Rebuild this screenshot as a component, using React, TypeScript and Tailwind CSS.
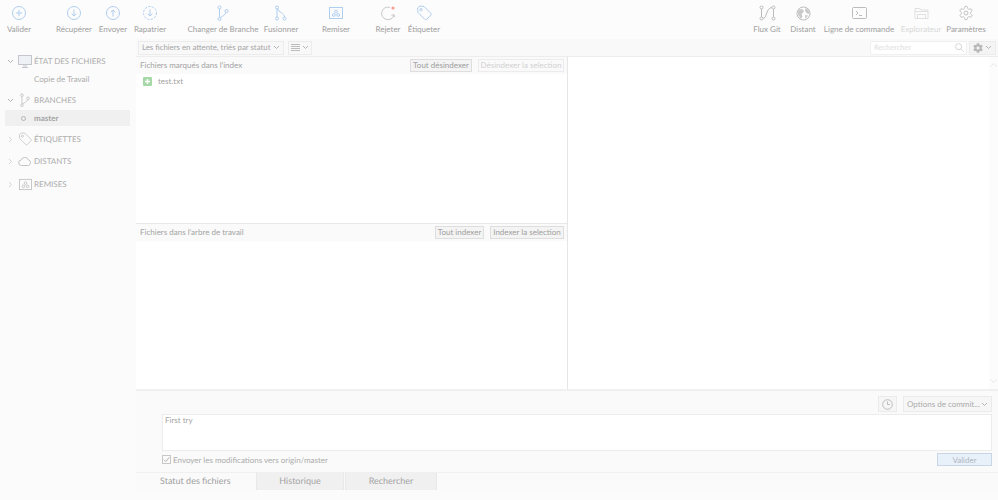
import type { ReactNode } from 'react'
import { FaCog } from 'react-icons/fa'

const BLUE = '#b0cef0'
const GREY = '#bcbcbc'

// ─── Icons ────────────────────────────────────────────────────────────────────

function CircleIcon({ kind }: { kind: 'plus' | 'down' | 'up' | 'dashed' }) {
  return (
    <svg width="16" height="16" viewBox="0 0 16 16" fill="none" stroke={BLUE} strokeWidth="1">
      <circle cx="8" cy="8" r="6.5" strokeDasharray={kind === 'dashed' ? '2.2 1.3' : undefined} />
      {kind === 'plus' && <path d="M8 4.8v6.4M4.8 8h6.4" />}
      {(kind === 'down' || kind === 'dashed') && <path d="M8 4.5v6.5M5.6 8.7 8 11l2.4-2.3" />}
      {kind === 'up' && <path d="M8 11.5V5M5.6 7.3 8 5l2.4 2.3" />}
    </svg>
  )
}

function BranchIcon({ color = BLUE, size = 16 }: { color?: string; size?: number }) {
  return (
    <svg width={size} height={size} viewBox="0 0 16 16" fill="none" stroke={color} strokeWidth="1">
      <circle cx="4.5" cy="2.5" r="1.5" />
      <circle cx="11.5" cy="6" r="1.5" />
      <circle cx="4.5" cy="14" r="1.5" />
      <path d="M4.5 4v8.5M11 7.5c-.4 2.5-3.5 3.3-5.6 5.2" />
    </svg>
  )
}

function MergeIcon() {
  return (
    <svg width="16" height="16" viewBox="0 0 16 16" fill="none" stroke={BLUE} strokeWidth="1">
      <circle cx="4" cy="2.5" r="1.5" />
      <circle cx="4" cy="13.5" r="1.5" />
      <circle cx="11.5" cy="13.5" r="1.5" />
      <path d="M4 4v8M4.8 4c.5 3 6.5 4 6.7 8" />
    </svg>
  )
}

function StashIcon({ color = BLUE, size = 14 }: { color?: string; size?: number }) {
  return (
    <svg width={size} height={size} viewBox="0 0 14 14" fill="none" stroke={color} strokeWidth="1">
      <rect x="0.5" y="1.5" width="13" height="11" />
      <circle cx="7" cy="5.5" r="1.4" />
      <circle cx="4.8" cy="9" r="1.4" />
      <circle cx="9.2" cy="9" r="1.4" />
    </svg>
  )
}

function DiscardIcon() {
  return (
    <svg width="16" height="16" viewBox="0 0 16 16" fill="none" stroke="#c8c8c8" strokeWidth="1">
      <path d="M10 2.4A6.3 6.3 0 1 0 14 10" />
      <path d="M14.4 12.2 14 9.6l-2.6.7" />
      <circle cx="13" cy="3" r="1.6" fill="#f7a08e" stroke="none" />
    </svg>
  )
}

function TagIcon({ color = BLUE, size = 16 }: { color?: string; size?: number }) {
  return (
    <svg width={size} height={size} viewBox="0 0 16 16" fill="none" stroke={color} strokeWidth="1">
      <path d="M1.5 3 4 1l4 .5 7 7a1 1 0 0 1 0 1.4l-4.6 4.6a1 1 0 0 1-1.4 0l-7-7z" />
      <circle cx="5" cy="4.7" r="1.2" />
    </svg>
  )
}

function FlowIcon() {
  return (
    <svg width="17" height="16" viewBox="0 0 17 16" fill="none" stroke={GREY} strokeWidth="1">
      <circle cx="2.5" cy="2.5" r="1.5" />
      <circle cx="2.5" cy="13.5" r="1.5" />
      <circle cx="14.5" cy="2.5" r="1.5" />
      <circle cx="14.5" cy="13.5" r="1.5" />
      <path d="M2.5 4v8M14.5 4v8M4 13.5c4 0 3-11 9-11" />
    </svg>
  )
}

function GlobeIcon() {
  return (
    <svg width="15" height="15" viewBox="0 0 15 15">
      <circle cx="7.5" cy="7.5" r="6.5" fill="#fff" stroke={GREY} />
      <path d="M3 3.5 6.5 3 8 5.5 5.5 8 6.5 10.5 5 13 2.5 9.5 1.5 6zM9.5 2l3 2 1 4-2.5-.5L9 5zM9 9l3 .5-2.5 3.5z" fill="#cacaca" />
    </svg>
  )
}

function TerminalIcon() {
  return (
    <svg width="15" height="14" viewBox="0 0 15 14" fill="none" stroke={GREY} strokeWidth="1">
      <rect x="0.5" y="1.5" width="14" height="11" rx="1" />
      <path d="m4 5 2 2-2 2M7 9.5h3" />
    </svg>
  )
}

function FolderIcon() {
  return (
    <svg width="15" height="14" viewBox="0 0 15 14" fill="none" stroke="#e0e0e0" strokeWidth="1">
      <path d="M1 2.5h5l1 1.5h7v8.5H1zM3.5 12.5v-4h8v4M1 5.5h13" />
    </svg>
  )
}

function GearIcon() {
  return (
    <svg width="16" height="16" viewBox="0 0 24 24" fill="none" stroke={GREY} strokeWidth="1.4">
      <path d="M12.22 2h-.44a2 2 0 0 0-2 2v.18a2 2 0 0 1-1 1.73l-.43.25a2 2 0 0 1-2 0l-.15-.08a2 2 0 0 0-2.73.73l-.22.38a2 2 0 0 0 .73 2.73l.15.1a2 2 0 0 1 1 1.72v.51a2 2 0 0 1-1 1.74l-.15.09a2 2 0 0 0-.73 2.73l.22.38a2 2 0 0 0 2.73.73l.15-.08a2 2 0 0 1 2 0l.43.25a2 2 0 0 1 1 1.73V20a2 2 0 0 0 2 2h.44a2 2 0 0 0 2-2v-.18a2 2 0 0 1 1-1.73l.43-.25a2 2 0 0 1 2 0l.15.08a2 2 0 0 0 2.73-.73l.22-.39a2 2 0 0 0-.73-2.73l-.15-.08a2 2 0 0 1-1-1.74v-.5a2 2 0 0 1 1-1.74l.15-.09a2 2 0 0 0 .73-2.73l-.22-.38a2 2 0 0 0-2.73-.73l-.15.08a2 2 0 0 1-2 0l-.43-.25a2 2 0 0 1-1-1.73V4a2 2 0 0 0-2-2z" />
      <circle cx="12" cy="12" r="3" />
    </svg>
  )
}

function Chevron({ open, className = '' }: { open?: boolean; className?: string }) {
  return (
    <svg width="7" height="7" viewBox="0 0 7 7" fill="none" stroke={open ? '#b4b4b4' : '#d4d4d4'} strokeWidth="1" className={`shrink-0 ${className}`}>
      <path d={open ? 'M1 2 3.5 4.5 6 2' : 'M2 1l2.5 2.5L2 6'} />
    </svg>
  )
}

// ─── Toolbar ──────────────────────────────────────────────────────────────────

function ToolItem({ label, icon, className, faded }: { label: string; icon: ReactNode; className: string; faded?: boolean }) {
  return (
    <div className={`flex flex-col items-center shrink-0 ${className}`}>
      <div className="h-4 flex items-center justify-center mt-[5px]">{icon}</div>
      <span className={`mt-[1px] text-[8px] leading-[14px] whitespace-nowrap ${faded ? 'text-[#d8d8d8]' : 'text-[#a0a0a0]'}`}>{label}</span>
    </div>
  )
}

function Toolbar() {
  return (
    <div className="flex h-[39px] bg-[#fcfcfc] pr-[12px]">
      <ToolItem label="Valider" icon={<CircleIcon kind="plus" />} className="w-[38px]" />
      <ToolItem label="Récupérer" icon={<CircleIcon kind="down" />} className="w-[38px] ml-[17px]" />
      <ToolItem label="Envoyer" icon={<CircleIcon kind="up" />} className="w-[32px] ml-[4px]" />
      <ToolItem label="Rapatrier" icon={<CircleIcon kind="dashed" />} className="w-[34px] ml-[4px]" />
      <ToolItem label="Changer de Branche" icon={<BranchIcon />} className="w-[72px] ml-[20px]" />
      <ToolItem label="Fusionner" icon={<MergeIcon />} className="w-[36px] ml-[4px]" />
      <ToolItem label="Remiser" icon={<StashIcon />} className="w-[32px] ml-[21px]" />
      <ToolItem label="Rejeter" icon={<DiscardIcon />} className="w-[28px] ml-[22px]" />
      <ToolItem label="Étiqueter" icon={<TagIcon />} className="w-[34px] ml-[5px]" />
      <ToolItem label="Flux Git" icon={<FlowIcon />} className="w-[28px] ml-auto" />
      <ToolItem label="Distant" icon={<GlobeIcon />} className="w-[28px] ml-[8px]" />
      <ToolItem label="Ligne de commande" icon={<TerminalIcon />} className="w-[72px] ml-[6px]" />
      <ToolItem label="Explorateur" icon={<FolderIcon />} className="w-[42px] ml-[5px]" faded />
      <ToolItem label="Paramètres" icon={<GearIcon />} className="w-[40px] ml-[4px]" />
    </div>
  )
}

// ─── Sidebar ──────────────────────────────────────────────────────────────────

function SectionRow({ label, icon, open, className = '' }: { label: string; icon: ReactNode; open?: boolean; className?: string }) {
  return (
    <div className={`flex items-center h-[16px] pl-[7px] ${className}`}>
      <div className="w-[11px] shrink-0 flex items-center"><Chevron open={open} /></div>
      <div className="w-[14px] shrink-0 flex items-center justify-center">{icon}</div>
      <span className="ml-[2px] text-[8px] text-[#acacac] whitespace-nowrap">{label}</span>
    </div>
  )
}

function Sidebar() {
  return (
    <div className="w-[136px] shrink-0 bg-[#fbfbfb] pt-[14px]">
      <SectionRow
        label="ÉTAT DES FICHIERS"
        open
        icon={
          <svg width="14" height="13" viewBox="0 0 14 13">
            <rect x="0.5" y="0.5" width="13" height="9" fill="#eef1f6" stroke="#c4c8ce" />
            <path d="M5 11h4M4 12.5h6" stroke="#c4c8ce" />
          </svg>
        }
      />
      <div className="ml-[34px] mt-[2px] h-[16px] leading-[16px] text-[8px] text-[#acacac]">Copie de Travail</div>
      <SectionRow label="BRANCHES" open className="mt-[5px]" icon={<BranchIcon color="#c4c4c4" size={14} />} />
      <div className="mx-[5px] mt-[2px] w-[125px] h-[16px] bg-[#f0f0f0] flex items-center pl-[16px]">
        <span className="w-[5px] h-[5px] rounded-full border border-[#b4b4b4]" />
        <span className="ml-[8px] text-[8px] font-bold text-[#a4a4a4]">master</span>
      </div>
      <SectionRow label="ÉTIQUETTES" className="mt-[5px]" icon={<TagIcon color="#c8c8c8" size={14} />} />
      <SectionRow
        label="DISTANTS"
        className="mt-[6px]"
        icon={
          <svg width="14" height="9" viewBox="0 0 14 9" fill="none" stroke="#c4c4c4">
            <path d="M3.5 8.5a2.7 2.7 0 0 1-.3-5.4 3.8 3.8 0 0 1 7.2-.3 3 3 0 0 1 .1 5.7z" />
          </svg>
        }
      />
      <SectionRow label="REMISES" className="mt-[7px]" icon={<StashIcon color="#c4c4c4" size={13} />} />
    </div>
  )
}

// ─── Main ─────────────────────────────────────────────────────────────────────

function SmallButton({ label, disabled, className = '' }: { label: string; disabled?: boolean; className?: string }) {
  return (
    <div className={`h-[13px] flex items-center justify-center border text-[8px] leading-none whitespace-nowrap ${disabled ? 'border-[#ececec] bg-[#fafafa] text-[#d2d2d2]' : 'border-[#dedede] bg-[#f4f4f4] text-[#a0a0a0]'} ${className}`}>
      {label}
    </div>
  )
}

function FilterBar() {
  return (
    <div className="h-[18px] shrink-0 flex items-center bg-[#f9f9f9] border-b border-[#ededed] pl-[2px] pr-[2px]">
      <div className="w-[146px] shrink-0 h-[14px] border border-[#ececec] bg-[#f8f8f8] flex items-center justify-between pl-[3px] pr-[3px]">
        <span className="text-[7.8px] text-[#a4a4a4] whitespace-nowrap">Les fichiers en attente, triés par statut</span>
        <Chevron open />
      </div>
      <div className="ml-[4px] w-[24px] shrink-0 h-[14px] border border-[#ececec] bg-[#f8f8f8] flex items-center justify-between pl-[2px] pr-[2px]">
        <svg width="9" height="7" viewBox="0 0 9 7" stroke="#bcbcbc"><path d="M0 .5h9M0 2.5h9M0 4.5h9M0 6.5h9" /></svg>
        <Chevron open />
      </div>
      <div className="ml-auto w-[97px] h-[14px] border border-[#f0f0f0] bg-white flex items-center justify-between pl-[3px] pr-[2px]">
        <span className="text-[7.5px] text-[#dddddd]">Rechercher</span>
        <svg width="9" height="9" viewBox="0 0 9 9" fill="none" stroke="#d4d4d4"><circle cx="3.6" cy="3.6" r="3" /><path d="M6 6l2.6 2.6" /></svg>
      </div>
      <div className="ml-[2px] w-[27px] h-[14px] border border-[#ececec] bg-[#f4f4f4] flex items-center justify-between px-[3px]">
        <FaCog size={10} color="#b8b8b8" />
        <Chevron open />
      </div>
    </div>
  )
}

function PaneHeader({ title, children }: { title: string; children: ReactNode }) {
  return (
    <div className="h-[17px] shrink-0 flex items-center bg-[#fafafa] pl-[4px] pr-[3px] pb-[1px]">
      <span className="text-[8px] text-[#a4a4a4] whitespace-nowrap">{title}</span>
      <div className="ml-auto flex gap-[6px]">{children}</div>
    </div>
  )
}

function FilePanes() {
  return (
    <div className="flex flex-1 min-h-0 border-b-2 border-[#f0f0f0]">
      <div className="w-[432px] shrink-0 flex flex-col border-r border-[#e6e6e6]">
        <PaneHeader title="Fichiers marqués dans l'index">
          <SmallButton label="Tout désindexer" className="w-[62px]" />
          <SmallButton label="Désindexer la selection" disabled className="w-[86px]" />
        </PaneHeader>
        <div className="h-[150px] bg-white border-b border-[#e8e8e8] pt-[1px]">
          <div className="flex items-center h-[12px] pl-[7px]">
            <span className="w-[9px] h-[9px] rounded-[1px] bg-[#a6d8a8] flex items-center justify-center text-white">
              <svg width="7" height="7" viewBox="0 0 7 7" stroke="#fff" strokeWidth="1.4"><path d="M3.5 1v5M1 3.5h5" /></svg>
            </span>
            <span className="ml-[6px] text-[8px] text-[#a4a4a4]">test.txt</span>
          </div>
        </div>
        <PaneHeader title="Fichiers dans l'arbre de travail">
          <SmallButton label="Tout indexer" className="w-[49px]" />
          <SmallButton label="Indexer la selection" className="w-[74px]" />
        </PaneHeader>
        <div className="flex-1 bg-white" />
      </div>
      <div className="flex-1 flex bg-white">
        <div className="flex-1" />
        <div className="w-[9px] bg-[#fcfcfc] flex flex-col items-center justify-between py-[6px]">
          <svg width="7" height="4" viewBox="0 0 7 4" fill="none" stroke="#e6e6e6"><path d="M.5 3.5l3-3 3 3" /></svg>
          <svg width="7" height="4" viewBox="0 0 7 4" fill="none" stroke="#e6e6e6"><path d="M.5.5l3 3 3-3" /></svg>
        </div>
      </div>
    </div>
  )
}

function CommitArea() {
  return (
    <div className="h-[82px] shrink-0 bg-[#fafafa] border-b border-[#f0f0f0] pl-[26px] pr-[6px] pt-[5px]">
      <div className="flex justify-end items-center h-[16px]">
        <div className="w-[19px] h-[16px] border border-[#ebebeb] bg-[#f6f6f6] flex items-center justify-center">
          <svg width="11" height="11" viewBox="0 0 11 11" fill="none" stroke="#bcbcbc"><circle cx="5.5" cy="5.5" r="4.8" /><path d="M5.5 2.5v3h2.4" /></svg>
        </div>
        <div className="ml-[6px] w-[89px] h-[16px] border border-[#ebebeb] bg-[#f6f6f6] flex items-center justify-between pl-[3px] pr-[3px]">
          <span className="text-[8px] text-[#acacac] whitespace-nowrap">Options de commit...</span>
          <Chevron open />
        </div>
      </div>
      <div className="mt-[2px] h-[37px] border border-[#ececec] bg-white pl-[2px] text-[8px] leading-[10px] text-[#a4a4a4]">First try</div>
      <div className="flex items-center mt-[1px] h-[15px]">
        <span className="w-[9px] h-[9px] border border-[#c8c8c8] flex items-center justify-center">
          <svg width="7" height="7" viewBox="0 0 7 7" fill="none" stroke="#b4b4b4"><path d="M.8 3.6 2.8 5.6 6.4 1.2" /></svg>
        </span>
        <span className="ml-[2px] text-[8px] text-[#acacac] whitespace-nowrap">Envoyer les modifications vers origin/master</span>
        <div className="ml-auto w-[55px] h-[13px] border border-[#c9d6e6] bg-[#e8f0fa] flex items-center justify-center text-[8px] text-[#b0b8c2]">Valider</div>
      </div>
    </div>
  )
}

function Tabs() {
  return (
    <div className="flex h-[17px] shrink-0 pl-[23px] bg-[#fafafa]">
      <div className="w-[96px] flex items-center pl-[1px] pb-[2px] text-[9px] text-[#a0a0a0] whitespace-nowrap">Statut des fichiers</div>
      <div className="w-[88px] ml-[1px] bg-[#f0f0f0] border-x border-[#e8e8e8] flex items-center justify-center pb-[2px] text-[9px] text-[#a4a4a4]">Historique</div>
      <div className="w-[92px] ml-[1px] bg-[#f0f0f0] border-x border-[#e8e8e8] flex items-center justify-center pb-[2px] text-[9px] text-[#a4a4a4]">Rechercher</div>
    </div>
  )
}

// ─── Export ───────────────────────────────────────────────────────────────────

export default function App() {
  return (
    <div className="w-[998px] h-[500px] overflow-hidden flex flex-col bg-[#fbfbfb] font-['Lato',sans-serif] [text-rendering:geometricPrecision] antialiased">
      <Toolbar />
      <div className="flex flex-1 min-h-0">
        <Sidebar />
        <div className="flex-1 min-w-0 flex flex-col pb-[10px]">
          <FilterBar />
          <FilePanes />
          <CommitArea />
          <Tabs />
        </div>
      </div>
    </div>
  )
}
